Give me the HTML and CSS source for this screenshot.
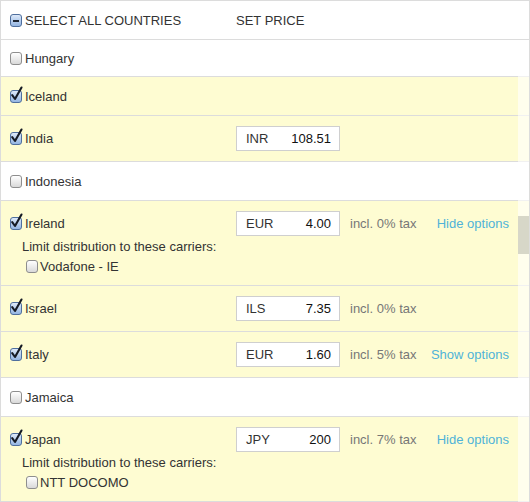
FILE: index.html
```html
<!DOCTYPE html>
<html>
<head>
<meta charset="utf-8">
<link rel="stylesheet" href="styles.css">
</head>
<body>
<div class="panel">
  <div class="head">
    <div class="c-country"><span class="cb on minus"></span>SELECT ALL COUNTRIES</div>
    <div class="c-price">SET PRICE</div>
  </div>
  <div class="list">
    <div class="row first"><div class="c-country"><span class="cb"></span>Hungary</div></div>
    <div class="row sel"><div class="c-country"><span class="cb on"><svg viewBox="0 0 12 16"><path d="M2.2 9.2 L5 13 L11.5 1.5" /></svg></span>Iceland</div></div>
    <div class="row sel pad">
      <div class="line">
        <div class="c-country"><span class="cb on"><svg viewBox="0 0 12 16"><path d="M2.2 9.2 L5 13 L11.5 1.5" /></svg></span>India</div>
        <div class="price"><span>INR</span><span class="val">108.51</span></div>
      </div>
    </div>
    <div class="row"><div class="c-country"><span class="cb"></span>Indonesia</div></div>
    <div class="row sel pad">
      <div class="line">
        <div class="c-country"><span class="cb on"><svg viewBox="0 0 12 16"><path d="M2.2 9.2 L5 13 L11.5 1.5" /></svg></span>Ireland</div>
        <div class="price"><span>EUR</span><span class="val">4.00</span></div>
        <div class="tax">incl. 0% tax</div>
        <a class="opt">Hide options</a>
      </div>
      <div class="carriers">
        <div class="limit">Limit distribution to these carriers:</div>
        <div class="carrier"><span class="cb"></span>Vodafone - IE</div>
      </div>
    </div>
    <div class="row sel pad">
      <div class="line">
        <div class="c-country"><span class="cb on"><svg viewBox="0 0 12 16"><path d="M2.2 9.2 L5 13 L11.5 1.5" /></svg></span>Israel</div>
        <div class="price"><span>ILS</span><span class="val">7.35</span></div>
        <div class="tax">incl. 0% tax</div>
      </div>
    </div>
    <div class="row sel pad">
      <div class="line">
        <div class="c-country"><span class="cb on"><svg viewBox="0 0 12 16"><path d="M2.2 9.2 L5 13 L11.5 1.5" /></svg></span>Italy</div>
        <div class="price"><span>EUR</span><span class="val">1.60</span></div>
        <div class="tax">incl. 5% tax</div>
        <a class="opt">Show options</a>
      </div>
    </div>
    <div class="row"><div class="c-country"><span class="cb"></span>Jamaica</div></div>
    <div class="row sel pad">
      <div class="line">
        <div class="c-country"><span class="cb on"><svg viewBox="0 0 12 16"><path d="M2.2 9.2 L5 13 L11.5 1.5" /></svg></span>Japan</div>
        <div class="price"><span>JPY</span><span class="val">200</span></div>
        <div class="tax">incl. 7% tax</div>
        <a class="opt">Hide options</a>
      </div>
      <div class="carriers">
        <div class="limit">Limit distribution to these carriers:</div>
        <div class="carrier"><span class="cb"></span>NTT DOCOMO</div>
      </div>
    </div>
  </div>
  <div class="scrollbar"><div class="thumb"></div></div>
</div>
</body>
</html>
```
FILE: styles.css
```css
html, body {
  margin: 0;
  padding: 0;
  background: #fff;
}
body {
  font-family: "Liberation Sans", Arial, Helvetica, sans-serif;
  font-size: 13px;
  color: #333;
}
.panel {
  position: relative;
  width: 528px;
  height: 510px;
  border: 1px solid #dcdcdc;
  border-bottom: none;
  overflow: hidden;
}
.head {
  height: 38px;
  border-bottom: 1px solid #dcdcdc;
  display: grid;
  grid-template-columns: 226px 1fr;
  align-items: center;
  padding-left: 9px;
}
.c-country {
  display: flex;
  align-items: center;
}
.list {
  width: 100%;
}
.row {
  border-bottom: 1px solid #dcdcdc;
  height: 38px;
  display: flex;
  align-items: center;
  padding: 0 20px 0 9px;
}
.row.first {
  height: 36px;
}
.row.sel {
  background: #fefcd2;
}
.row.pad {
  height: auto;
  display: block;
  padding-top: 10px;
  padding-bottom: 10px;
}
.line {
  display: grid;
  grid-template-columns: 226px 104px auto 1fr;
  align-items: center;
  height: 25px;
}
.price {
  box-sizing: border-box;
  height: 25px;
  border: 1px solid #cfcfcf;
  background: #fff;
  display: flex;
  justify-content: space-between;
  align-items: center;
  padding: 0 8px 0 9px;
  color: #333;
}
.price .val {
  color: #111;
}
.tax {
  color: #777;
  margin-left: 10px;
}
.opt {
  color: #4fb3d8;
  justify-self: end;
  cursor: pointer;
}
.carriers {
  margin-top: 2px;
  margin-bottom: -1px;
}
.limit {
  height: 18px;
  line-height: 18px;
  padding-left: 12px;
}
.carrier {
  height: 20px;
  display: flex;
  align-items: center;
  padding-left: 16px;
}
.cb {
  position: relative;
  display: inline-block;
  flex: none;
  box-sizing: border-box;
  width: 12px;
  height: 13px;
  margin-right: 3px;
  border: 1px solid #8e8e8e;
  border-radius: 3px;
  background: linear-gradient(#ffffff, #d9d9d9);
}
.carrier .cb {
  margin-right: 2px;
}
.cb.on {
  border-color: #4f6f9e;
  background: linear-gradient(#dde9f9, #94b5e2);
}
.cb svg {
  position: absolute;
  left: -1px;
  top: -5px;
  width: 12px;
  height: 16px;
  overflow: visible;
}
.cb svg path {
  fill: none;
  stroke: #151a24;
  stroke-width: 2.1;
  stroke-linecap: round;
  stroke-linejoin: round;
}
.cb.minus::after {
  content: "";
  position: absolute;
  left: 2px;
  top: 5px;
  width: 6px;
  height: 2px;
  background: #1d2533;
}
.scrollbar {
  position: absolute;
  right: 0;
  top: 40px;
  bottom: 0;
  width: 11px;
  background: rgba(255, 255, 255, 0.6);
}
.thumb {
  margin-top: 175px;
  height: 38px;
  background: #d7d7c8;
}
```
